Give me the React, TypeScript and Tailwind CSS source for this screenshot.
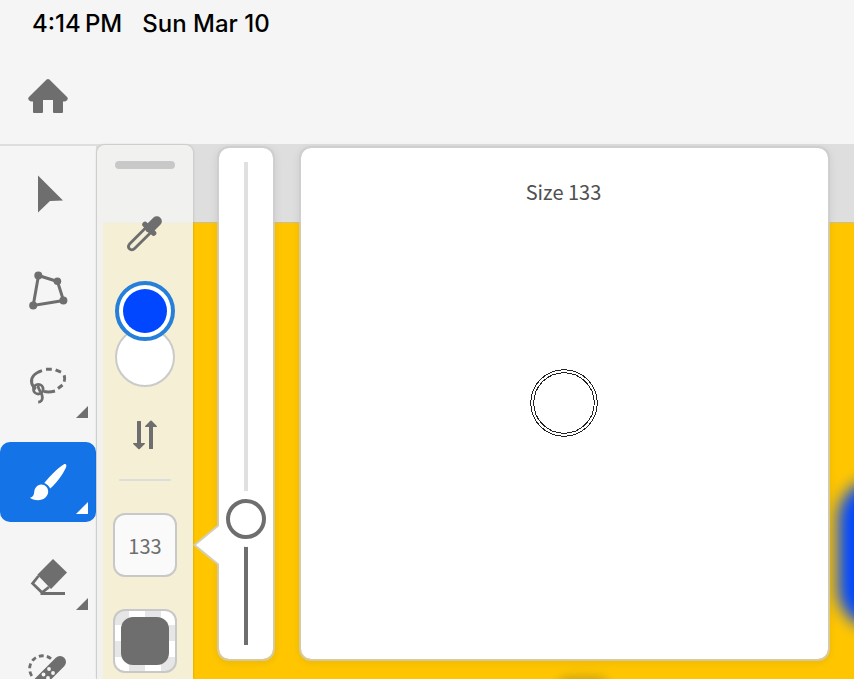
import { useState, type ReactNode } from "react";
import clsx from "clsx";

type ToolId = "move" | "transform" | "lasso" | "brush" | "eraser" | "healing";

type Tool = {
  id: ToolId;
  label: string;
  hasMore?: boolean;
  icon: ReactNode;
};

const MAX_SIZE = 556;

const tools: Tool[] = [
  { id: "move", label: "Move", icon: <path d="M14 5.5 L39 30.5 L26 31 L14 42.5 Z" fill="currentColor" /> },
  {
    id: "transform",
    label: "Transform",
    icon: (
      <>
        <path d="M14.5 9.5 L33.5 15.5 L39.5 34.5 L9.2 39.5 Z" fill="none" stroke="currentColor" strokeWidth="3" />
        <g fill="currentColor">
          <circle cx="14.3" cy="9.5" r="4" />
          <circle cx="33.4" cy="15.3" r="3.8" />
          <circle cx="39.4" cy="34.5" r="4" />
          <circle cx="9.2" cy="39.5" r="4" />
        </g>
      </>
    ),
  },
  {
    id: "lasso",
    label: "Lasso",
    hasMore: true,
    icon: (
      <g fill="none" stroke="currentColor" strokeWidth="3">
        <path d="M18 8.6 C10 11 6.6 16 7.7 21 C8.2 23.6 9.6 25.4 12 27" />
        <path d="M20 29.6 C24 30.3 27.5 30 31 29" />
        <path d="M22 7.3 L27.8 7.2 M31.6 7.9 L37 10.2 M40.2 13.2 Q41.2 16.5 40.2 19.6 M38.5 23 L34 26.5" />
        <circle cx="14.3" cy="27.2" r="4.8" strokeWidth="2.8" />
        <path d="M14 23.5 C14.5 30 18.6 30 18.4 35.5 C18.2 38.8 17 40 14.2 40" strokeWidth="2.8" />
      </g>
    ),
  },
  {
    id: "brush",
    label: "Brush",
    hasMore: true,
    icon: (
      <g fill="currentColor">
        <path d="M40 6.2 C42 5.3 43 7 42 9.4 C38.5 17 32.5 25 26.2 30.6 C25 28 23 26 20.2 25 C26 18 33 10.5 40 6.2 Z" />
        <path d="M17 26.6 C21 26.4 24.4 30 24.2 34 C23.8 39 19 42.3 14 42.2 C10.5 42 7.5 41.3 6 39.8 C9 39 10 37 10.3 33.5 C10.8 29.8 13.4 26.8 17 26.6 Z" />
      </g>
    ),
  },
  {
    id: "eraser",
    label: "Eraser",
    hasMore: true,
    icon: (
      <>
        <path d="M29 5 L43 18.5 L27 35 L13.3 20.8 Z" fill="currentColor" />
        <path d="M14.5 22 L8.6 29.4 L18 38.6 L25 33 M16.5 39.5 H41" fill="none" stroke="currentColor" strokeWidth="2.8" />
      </>
    ),
  },
  {
    id: "healing",
    label: "Healing brush",
    hasMore: true,
    icon: (
      <>
        <path
          d="M27 8.8 A13 13 0 0 0 9.5 28"
          fill="none"
          stroke="currentColor"
          strokeWidth="2.8"
          strokeDasharray="4.8 3.2"
        />
        <path d="M36 12 L12 36" stroke="currentColor" strokeWidth="12" strokeLinecap="round" />
        <g fill="#f5f5f5">
          <circle cx="25" cy="19" r="1.9" />
          <circle cx="29" cy="23" r="1.9" />
          <circle cx="19.5" cy="24.5" r="1.9" />
          <circle cx="24" cy="28" r="1.9" />
        </g>
      </>
    ),
  },
];

export default function App() {
  const [activeTool, setActiveTool] = useState<ToolId>("brush");
  const [size, setSize] = useState(133);

  return (
    <div className="flex h-screen flex-col overflow-hidden bg-[#f5f5f5] font-['Noto_Sans_CJK_SC','Noto_Sans',sans-serif] text-[#6e6e6e]">
      <header className="h-36 shrink-0">
        <div className="flex h-12 items-center gap-5 px-8 font-['Inter',sans-serif] text-2xl leading-none font-medium text-black">
          <time>4:14{"\u2009"}PM</time>
          <span>Sun Mar 10</span>
        </div>
        <button aria-label="Home" className="ml-6 grid h-24 w-12 place-items-center">
          <Icon>
            <path
              d="M22.6 7.6 Q24 6.4 25.4 7.6 L43.3 25.2 Q44.5 26.7 43.2 28 Q42 29.5 40 29.5 H39 V40 Q39 41 38 41 H30 Q29 41 29 40 V28 H19 V40 Q19 41 18 41 H10 Q9 41 9 40 V29.5 H8 Q6 29.5 4.8 28 Q3.5 26.7 4.7 25.2 Z"
              fill="currentColor"
            />
          </Icon>
        </button>
      </header>

      <div className="flex min-h-0 flex-1">
        <nav aria-label="Tools" className="flex w-24 shrink-0 flex-col gap-4 border-t-2 border-[#dedede] pt-2">
          {tools.map((tool) => (
            <ToolButton key={tool.id} tool={tool} active={tool.id === activeTool} onSelect={() => setActiveTool(tool.id)} />
          ))}
        </nav>

        <main className="relative flex min-w-0 flex-1 pl-px">
          <Canvas />
          <BrushOptions size={size} />
          <SizeSlider size={size} onChange={setSize} />
          <SizePreview size={size} />
        </main>
      </div>
    </div>
  );
}

function Icon({ children }: { children: ReactNode }) {
  return (
    <svg viewBox="0 0 48 48" className="size-12" aria-hidden="true">
      {children}
    </svg>
  );
}

function ToolButton({ tool, active, onSelect }: { tool: Tool; active: boolean; onSelect: () => void }) {
  return (
    <button
      aria-label={tool.label}
      aria-pressed={active}
      onClick={onSelect}
      className={clsx("relative grid h-20 w-full shrink-0 place-items-center rounded-[10px]", active && "bg-[#1473e6] text-white")}
    >
      <Icon>{tool.icon}</Icon>
      {tool.hasMore && (
        <svg viewBox="0 0 12 12" className="absolute right-2 bottom-2 size-3" aria-hidden="true">
          <path d="M12 0 V12 H0 Z" fill="currentColor" />
        </svg>
      )}
    </button>
  );
}

// Artwork that lies behind the floating panels
function Canvas() {
  return (
    <div className="absolute inset-0 flex flex-col overflow-hidden bg-[#dedede] pl-[7px]">
      <div className="h-[78px] shrink-0" />
      <div className="relative flex-1 border-t border-[#cbbf9a] bg-[#ffc600]">
        <div className="absolute top-64 -right-24 h-[150px] w-28 rounded-[40px] bg-[#0047ff] blur-[8px]" />
        <div className="absolute top-[454px] left-[456px] h-4 w-12 rounded-full bg-[#c99f10] blur-[6px]" />
      </div>
    </div>
  );
}

function BrushOptions({ size }: { size: number }) {
  return (
    <section
      aria-label="Brush options"
      className="relative mt-px flex w-24 shrink-0 flex-col items-center rounded-t-lg bg-[#f4f5f2]/88 pt-4 shadow-[0_0_3px_rgba(0,0,0,0.2)]"
    >
      <div className="h-2 w-15 shrink-0 rounded-full bg-[#c8c8c8]" />
      <button aria-label="Eyedropper" className="mt-10">
        <Icon>
          <path
            d="M25 18.5 L8.8 34.7 C7 36.8 7.2 38.6 8.4 39.8 C9.8 41.2 12 41.2 13.6 39.6 L29.8 23.4"
            fill="none"
            stroke="currentColor"
            strokeWidth="2.8"
          />
          <path d="M24 15.5 L32.6 24.1" stroke="currentColor" strokeWidth="5.5" strokeLinecap="round" />
          <path d="M35.8 12.2 L29 19" stroke="currentColor" strokeWidth="10" strokeLinecap="round" />
        </Icon>
      </button>

      <div className="mt-6 flex shrink-0 flex-col">
        <button
          aria-label="Foreground color"
          className="z-10 size-15 rounded-full border-4 border-[#2680d9] bg-white p-1"
        >
          <span className="block size-full rounded-full bg-[#0047ff]" />
        </button>
        <button aria-label="Background color" className="-mt-3.5 size-15 rounded-full border-2 border-[#cacaca] bg-white" />
      </div>

      <button aria-label="Swap colors" className="mt-6">
        <Icon>
          <path
            d="M16 10.5 Q16 10 16.5 10 H19.5 Q20 10 20 10.5 V32 H23.5 Q24.5 32.3 23.8 33 L18.7 38 Q18 38.7 17.3 38 L12.2 33 Q11.5 32.3 12.5 32 H16 Z M28 37.5 Q28 38 28.5 38 H31.5 Q32 38 32 37.5 V16 H35.5 Q36.5 15.7 35.8 15 L30.7 9.8 Q30 9.2 29.3 9.8 L24.2 15 Q23.5 15.7 24.5 16 H28 Z"
            fill="currentColor"
          />
        </Icon>
      </button>

      <hr className="mt-5 h-0.5 w-[52px] shrink-0 rounded-full border-0 bg-[#dbdedb]" />

      <button
        aria-label="Brush size"
        className="mt-8 size-16 shrink-0 rounded-xl border-2 border-[#c8c8c8] bg-[#fafafa] pt-0.5 text-xl leading-none"
      >
        {size}
      </button>
      <button
        aria-label="Brush opacity"
        className="mt-8 size-16 shrink-0 rounded-xl border-2 border-[#c8c8c8] bg-[repeating-conic-gradient(#fff_0_25%,#e6e6e6_0_50%)] bg-size-[32px_32px] bg-origin-border p-1.5"
      >
        <span className="block size-full rounded-xl bg-[#6e6e6e]" />
      </button>
    </section>
  );
}

function SizeSlider({ size, onChange }: { size: number; onChange: (size: number) => void }) {
  const filled = 4 + (size / MAX_SIZE) * 92;

  return (
    <section className="relative mt-0.5 mb-[18px] ml-6 flex w-[58px] shrink-0 justify-center rounded-xl border-2 border-[#cccccc]/80 bg-white bg-clip-padding pt-3.5 pb-3.5 shadow-[0_2px_8px_rgba(0,0,0,0.08)]">
      <svg viewBox="0 0 26 42" className="absolute top-[376px] -left-[26px] h-[42px] w-[26px]" aria-hidden="true">
        <path d="M26 1 L1.5 21 L26 41" fill="#fff" stroke="#d3cfb8" strokeWidth="2" />
      </svg>
      <input
        type="range"
        aria-label="Size"
        min={0}
        max={MAX_SIZE}
        value={size}
        onChange={(event) => onChange(Number(event.target.value))}
        style={{ backgroundImage: `linear-gradient(to top, #6e6e6e ${filled}%, #e0e0e0 ${filled}%)` }}
        className="relative h-full w-10 appearance-none bg-size-[4px_100%] bg-center bg-no-repeat [clip-path:inset(0)] [direction:rtl] [writing-mode:vertical-lr] [&::-webkit-slider-thumb]:size-10 [&::-webkit-slider-thumb]:appearance-none [&::-webkit-slider-thumb]:rounded-full [&::-webkit-slider-thumb]:border-4 [&::-webkit-slider-thumb]:border-[#6e6e6e] [&::-webkit-slider-thumb]:bg-white [&::-webkit-slider-thumb]:shadow-[0_0_0_8px_#fff]"
      />
    </section>
  );
}

function SizePreview({ size }: { size: number }) {
  const radius = size / 4;

  return (
    <section className="relative mx-6 mt-0.5 mb-[18px] grid min-w-0 flex-1 place-items-center rounded-xl border-2 border-[#cccccc]/80 bg-white bg-clip-padding shadow-[0_2px_8px_rgba(0,0,0,0.08)]">
      <h1 className="self-start pt-[30px] pr-0.5 text-xl leading-7 text-[#505050] [grid-area:1/1]">Size {size}</h1>
      <svg
        viewBox="-150 -150 300 300"
        className="mr-0.5 mb-0.5 size-[300px] [grid-area:1/1]"
        fill="none"
        stroke="#222"
        shapeRendering="crispEdges"
        aria-hidden="true"
      >
        <circle r={radius} />
        <circle r={radius - 3} />
      </svg>
    </section>
  );
}
